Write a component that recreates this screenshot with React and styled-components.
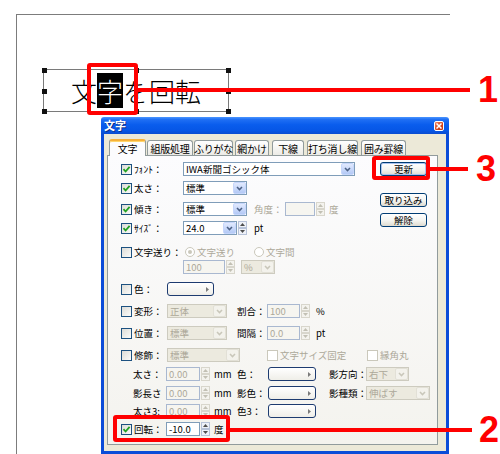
import React from "react";
import styled, { createGlobalStyle, css } from "styled-components";

const UI_FONT = `"Noto Sans CJK JP", "Noto Sans", sans-serif`;

const GlobalStyle = createGlobalStyle`
  html, body { margin: 0; padding: 0; background: #fff; }
  body { font-family: ${UI_FONT}; }
  * { box-sizing: border-box; }
`;

/* ---------- canvas ---------- */

const Stage = styled.div`
  position: relative;
  width: 500px;
  height: 454px;
  overflow: hidden;
  background: #fff;
`;

const PageSheet = styled.div`
  position: absolute;
  left: 16px;
  top: 14px;
  width: 434px;
  height: 460px;
  border-top: 1px solid #7c7c7c;
  border-left: 1px solid #7c7c7c;
`;

const TextFrame = styled.div`
  position: absolute;
  left: 26px;
  top: 54px;
  width: 186px;
  height: 43px;
  border: 1px solid #7a7a7a;
  display: flex;
  align-items: center;
  justify-content: center;
  font-size: 26px;
  font-weight: 300;
  line-height: 35px;
  color: #000;
`;

const Selected = styled.span`
  display: inline-block;
  background: #000;
  color: #fff;
  line-height: 35px;
`;

const Handle = styled.i`
  position: absolute;
  left: calc(${(p) => p.$x}% - 2px);
  top: calc(${(p) => p.$y}% - 2px);
  width: 5px;
  height: 5px;
  background: #111;
`;

/* ---------- dialog window ---------- */

const Dialog = styled.div`
  position: absolute;
  left: 101px;
  top: 117px;
  width: 348px;
  height: 337px;
  display: flex;
  flex-direction: column;
  font-size: 9.5px;
  color: #000;
`;

const TitleBar = styled.div`
  flex: none;
  height: 17px;
  display: flex;
  align-items: center;
  justify-content: space-between;
  padding: 0 5px 0 3px;
  border-radius: 3px 3px 0 0;
  background: linear-gradient(
    to bottom,
    #4a95ff 0%,
    #1f6ff4 15%,
    #0a5ded 45%,
    #0656e6 80%,
    #0a4cd0 100%
  );
`;

const TitleText = styled.span`
  color: #fff;
  font-weight: 700;
  font-size: 11px;
  line-height: 17px;
  text-shadow: 1px 1px 0 #0a2f8a;
`;

const CloseButton = styled.span`
  width: 10px;
  height: 10px;
  border: 1px solid #fff;
  border-radius: 2px;
  background: linear-gradient(135deg, #f08a6a, #d8461e 55%, #c03410);
  display: flex;
  align-items: center;
  justify-content: center;
`;

const Body = styled.div`
  flex: 1;
  display: flex;
  flex-direction: column;
  background: #ece9d8;
  border: 3px solid #0b4cd8;
  border-top: none;
  padding: 5px 8px 6px 3px;
`;

const TabRow = styled.div`
  display: flex;
  align-items: flex-end;
  height: 16px;
  padding-left: 2px;
  position: relative;
  z-index: 1;
`;

const Tab = styled.div`
  flex: none;
  width: ${(p) => p.$w}px;
  margin-left: ${(p) => p.$gap}px;
  height: 15px;
  border: 1px solid #919b9c;
  border-bottom: none;
  border-radius: 3px 3px 0 0;
  background: linear-gradient(to bottom, #fff, #ecebe6);
  display: flex;
  align-items: center;
  justify-content: center;
  font-size: 10px;
  letter-spacing: -0.2px;
  white-space: nowrap;
  line-height: 13px;
  ${(p) =>
    p.$active &&
    css`
      height: 17px;
      margin-bottom: -1px;
      border-top: 2px solid #f6b13a;
      background: #fcfcfe;
      box-shadow: inset 0 1px 0 #ffd66b;
    `}
`;

const Panel = styled.div`
  flex: 1;
  border: 1px solid #919b9c;
  background: linear-gradient(to bottom, #fcfcfe, #f4f3ee);
  padding: 0 10px 0 13px;
  display: flex;
  flex-direction: column;
`;

const Upper = styled.div`
  display: flex;
  align-items: flex-start;
  padding-top: 6px;
`;

const Rows = styled.div`
  flex: 1;
  display: flex;
  flex-direction: column;
`;

const ButtonStack = styled.div`
  flex: none;
  width: 47px;
  display: flex;
  flex-direction: column;
`;

const PushButton = styled.div`
  height: 14px;
  margin-bottom: ${(p) => p.$mb || 0}px;
  border: 1px solid #003c74;
  border-radius: 3px;
  background: linear-gradient(to bottom, #fff 0%, #f4f4f0 55%, #dedbd0 100%);
  display: flex;
  align-items: center;
  justify-content: center;
  font-size: 9.5px;
  line-height: 12px;
  ${(p) =>
    p.$default &&
    css`
      box-shadow: inset 0 0 0 1px #a9c3f0;
    `}
`;

const Row = styled.div`
  display: flex;
  align-items: center;
  height: 14px;
  margin-top: ${(p) => p.$mt || 0}px;
  white-space: nowrap;
`;

const Text = styled.span`
  flex: none;
  display: inline-block;
  width: ${(p) => (p.$w ? `${p.$w}px` : "auto")};
  margin-left: ${(p) => p.$ml || 0}px;
  padding-left: ${(p) => p.$pl || 0}px;
  color: ${(p) => (p.$dim ? "#aca899" : "#000")};
  line-height: 14px;
  overflow: visible;
`;

const CheckWrap = styled.span`
  flex: none;
  display: inline-flex;
  align-items: center;
  width: ${(p) => (p.$w ? `${p.$w}px` : "auto")};
  margin-left: ${(p) => p.$ml || 0}px;
`;

const Box = styled.span`
  flex: none;
  width: 11px;
  height: 11px;
  margin-right: 2px;
  border: 1px solid ${(p) => (p.$off ? "#cac8bb" : "#1c5180")};
  background: ${(p) =>
    p.$off ? "#fff" : "linear-gradient(135deg, #dcdcd7, #fbfbf9)"};
  display: flex;
  align-items: center;
  justify-content: center;
`;

const Label = styled.span`
  color: ${(p) => (p.$off ? "#aca899" : "#000")};
  line-height: 14px;
`;

const Field = styled.div`
  flex: none;
  width: ${(p) => p.$w}px;
  height: 14px;
  margin-left: ${(p) => p.$ml || 0}px;
  border: 1px solid ${(p) => (p.$off ? "#a9b8d0" : "#7f9db9")};
  background: ${(p) => (p.$off ? "#f6f5f0" : "#fff")};
  color: ${(p) => (p.$off ? "#aca899" : "#000")};
  padding-left: 2px;
  line-height: 12px;
  overflow: hidden;
`;

const ComboBox = styled.div`
  flex: none;
  display: flex;
  width: ${(p) => p.$w}px;
  height: 14px;
  margin-left: ${(p) => p.$ml || 0}px;
  border: 1px solid ${(p) => (p.$off ? "#cdcbbf" : "#7f9db9")};
  background: ${(p) => (p.$off ? "#eceadf" : "#fff")};
  color: ${(p) => (p.$off ? "#aca899" : "#000")};
`;

const ComboText = styled.span`
  flex: 1;
  padding-left: 2px;
  line-height: 12px;
  overflow: hidden;
`;

const DropButton = styled.span`
  flex: none;
  width: 13px;
  height: 12px;
  display: flex;
  align-items: center;
  justify-content: center;
  border: 1px solid ${(p) => (p.$off ? "#e2e0d6" : "#c6d6fb")};
  border-radius: 2px;
  background: ${(p) =>
    p.$off ? "#f3f2ec" : "linear-gradient(to bottom, #e2eafe, #b3c9f6)"};
`;

const Spinner = styled.div`
  flex: none;
  width: 9px;
  height: 14px;
  margin-left: 1px;
  display: flex;
  flex-direction: column;
`;

const SpinButton = styled.span`
  flex: 1;
  display: flex;
  align-items: center;
  justify-content: center;
  border: 1px solid ${(p) => (p.$off ? "#d8d6cc" : "#b7c2d8")};
  background: ${(p) => (p.$off ? "#f4f3ee" : "#eef1f8")};
`;

const Swatch = styled.div`
  flex: none;
  width: ${(p) => p.$w}px;
  height: 14px;
  margin-left: ${(p) => p.$ml || 0}px;
  border: 1px solid #1d3b70;
  border-radius: 3px;
  background: linear-gradient(to bottom, #fff, #efeee8);
  display: flex;
  align-items: center;
  justify-content: flex-end;
  padding-right: 4px;
`;

const RadioWrap = styled.span`
  flex: none;
  display: inline-flex;
  align-items: center;
  margin-left: ${(p) => p.$ml || 0}px;
  color: #aca899;
`;

const RadioRing = styled.span`
  width: 10px;
  height: 10px;
  margin-right: 2px;
  border-radius: 50%;
  border: 1px solid #cac8bb;
  background: #fff;
  display: flex;
  align-items: center;
  justify-content: center;
`;

const RadioDot = styled.span`
  width: 4px;
  height: 4px;
  border-radius: 50%;
  background: #cac8bb;
`;

/* ---------- callouts ---------- */

const CalloutBox = styled.div`
  position: absolute;
  left: ${(p) => p.$x}px;
  top: ${(p) => p.$y}px;
  width: ${(p) => p.$w}px;
  height: ${(p) => p.$h}px;
  border: 4px solid #ff0000;
  border-radius: 3px;
  z-index: 5;
`;

const CalloutLine = styled.div`
  position: absolute;
  left: ${(p) => p.$x}px;
  top: ${(p) => p.$y}px;
  width: ${(p) => p.$w}px;
  height: 4px;
  background: #ff0000;
  z-index: 5;
`;

const CalloutNumber = styled.div`
  position: absolute;
  left: ${(p) => p.$x}px;
  top: ${(p) => p.$y}px;
  font-family: "Liberation Sans", Arial, sans-serif;
  font-weight: 700;
  font-size: 36px;
  line-height: 36px;
  color: #ff0000;
  z-index: 5;
`;

/* ---------- small drawings ---------- */

const Tick = () => (
  <svg width="9" height="9" viewBox="0 0 9 9">
    <path d="M1.5 4.2 L3.6 6.5 L7.6 1.8" fill="none" stroke="#21a121" strokeWidth="1.8" />
  </svg>
);

const Chevron = ({ off }) => (
  <svg width="7" height="5" viewBox="0 0 7 5">
    <path
      d="M1 1 L3.5 3.6 L6 1"
      fill="none"
      stroke={off ? "#c9c7ba" : "#4d6185"}
      strokeWidth="1.5"
    />
  </svg>
);

const Arrow = ({ up, off }) => (
  <svg width="5" height="3" viewBox="0 0 5 3">
    <path d={up ? "M0 3 L2.5 0 L5 3Z" : "M0 0 L2.5 3 L5 0Z"} fill={off ? "#c2c0b4" : "#4d4d4d"} />
  </svg>
);

const RightTri = () => (
  <svg width="3" height="5" viewBox="0 0 3 5">
    <path d="M0 0 L3 2.5 L0 5Z" fill="#7a7a7a" />
  </svg>
);

/* ---------- controls ---------- */

function Check({ checked, off, w, ml, children }) {
  return (
    <CheckWrap $w={w} $ml={ml}>
      <Box $off={off}>{checked && <Tick />}</Box>
      <Label $off={off}>{children}</Label>
    </CheckWrap>
  );
}

function Combo({ w, ml, off, children }) {
  return (
    <ComboBox $w={w} $ml={ml} $off={off}>
      <ComboText>{children}</ComboText>
      <DropButton $off={off}>
        <Chevron off={off} />
      </DropButton>
    </ComboBox>
  );
}

function Spin({ off }) {
  return (
    <Spinner>
      <SpinButton $off={off}>
        <Arrow up off={off} />
      </SpinButton>
      <SpinButton $off={off}>
        <Arrow off={off} />
      </SpinButton>
    </Spinner>
  );
}

function Radio({ on, ml, children }) {
  return (
    <RadioWrap $ml={ml}>
      <RadioRing>{on && <RadioDot />}</RadioRing>
      {children}
    </RadioWrap>
  );
}

function ColorPick({ w, ml }) {
  return (
    <Swatch $w={w} $ml={ml}>
      <RightTri />
    </Swatch>
  );
}

const TABS = [
  { label: "文字", w: 37, gap: 0, active: true },
  { label: "組版処理", w: 46, gap: 1 },
  { label: "ふりがな", w: 39, gap: 1 },
  { label: "網かけ", w: 34, gap: 2 },
  { label: "下線", w: 32, gap: 3 },
  { label: "打ち消し線", w: 51, gap: 3 },
  { label: "囲み罫線", w: 45, gap: 3 },
];

const HANDLES = [
  [0, 0], [50, 0], [100, 0],
  [0, 50], [100, 50],
  [0, 100], [50, 100], [100, 100],
];

export default function App() {
  return (
    <>
      <GlobalStyle />
      <Stage>
        <PageSheet>
          <TextFrame>
            文<Selected>字</Selected>を回転
            {HANDLES.map(([x, y]) => (
              <Handle key={`${x}-${y}`} $x={x} $y={y} />
            ))}
          </TextFrame>
        </PageSheet>

        <Dialog>
          <TitleBar>
            <TitleText>文字</TitleText>
            <CloseButton>
              <svg width="6" height="6" viewBox="0 0 6 6">
                <path d="M0.5 0.5 L5.5 5.5 M5.5 0.5 L0.5 5.5" stroke="#fff" strokeWidth="1.5" />
              </svg>
            </CloseButton>
          </TitleBar>

          <Body>
            <TabRow>
              {TABS.map((t) => (
                <Tab key={t.label} $w={t.w} $gap={t.gap} $active={t.active}>
                  {t.label}
                </Tab>
              ))}
            </TabRow>

            <Panel>
              <Upper>
                <Rows>
                  <Row>
                    <Check checked w={62}>ﾌｫﾝﾄ：</Check>
                    <Combo w={172}>IWA新聞ゴシック体</Combo>
                  </Row>
                  <Row $mt={5}>
                    <Check checked w={62}>太さ：</Check>
                    <Combo w={64}>標準</Combo>
                  </Row>
                  <Row $mt={7}>
                    <Check checked w={62}>傾き：</Check>
                    <Combo w={64}>標準</Combo>
                    <Text $dim $ml={7} $w={31}>角度：</Text>
                    <Field $off $w={30} />
                    <Spin off />
                    <Text $dim $ml={4}>度</Text>
                  </Row>
                  <Row $mt={5}>
                    <Check checked w={62}>ｻｲｽﾞ：</Check>
                    <Combo w={54}>24.0</Combo>
                    <Spin />
                    <Text $ml={7}>pt</Text>
                  </Row>
                </Rows>
                <ButtonStack>
                  <PushButton $default $mb={17}>更新</PushButton>
                  <PushButton $mb={6}>取り込み</PushButton>
                  <PushButton>解除</PushButton>
                </ButtonStack>
              </Upper>

              <Row $mt={10}>
                <Check w={62}>文字送り：</Check>
                <Radio on ml={2}>文字送り</Radio>
                <Radio ml={19}>文字間</Radio>
              </Row>
              <Row $mt={1}>
                <Text $w={62} />
                <Field $off $w={42}>100</Field>
                <Spin off />
                <Combo off w={34} ml={6}>%</Combo>
              </Row>
              <Row $mt={8}>
                <Check w={46}>色：</Check>
                <ColorPick w={47} />
              </Row>
              <Row $mt={8}>
                <Check w={46}>変形：</Check>
                <Combo off w={60}>正体</Combo>
                <Text $ml={10} $w={30}>割合：</Text>
                <Field $off $w={33}>100</Field>
                <Spin off />
                <Text $ml={6}>%</Text>
              </Row>
              <Row $mt={8}>
                <Check w={46}>位置：</Check>
                <Combo off w={60}>標準</Combo>
                <Text $ml={10} $w={30}>間隔：</Text>
                <Field $off $w={33}>0.0</Field>
                <Spin off />
                <Text $ml={6}>pt</Text>
              </Row>
              <Row $mt={8}>
                <Check w={46}>修飾：</Check>
                <Combo off w={73}>標準</Combo>
                <Check off w={100} ml={27}>文字サイズ固定</Check>
                <Check off>縁角丸</Check>
              </Row>
              <Row $mt={5}>
                <Text $w={45} $pl={12}>太さ：</Text>
                <Field $off $w={34}>0.00</Field>
                <Spin off />
                <Text $w={27} $pl={4}>mm</Text>
                <Text $w={31}>色：</Text>
                <ColorPick w={48} />
                <Text $ml={13} $w={37}>影方向：</Text>
                <Combo off w={43}>右下</Combo>
              </Row>
              <Row $mt={5}>
                <Text $w={45} $pl={12}>影長さ</Text>
                <Field $off $w={34}>0.00</Field>
                <Spin off />
                <Text $w={27} $pl={4}>mm</Text>
                <Text $w={31}>影色：</Text>
                <ColorPick w={48} />
                <Text $ml={13} $w={37}>影種類：</Text>
                <Combo off w={64}>伸ばす</Combo>
              </Row>
              <Row $mt={4}>
                <Text $w={45} $pl={12}>太さ3:</Text>
                <Field $off $w={34}>0.00</Field>
                <Spin off />
                <Text $w={27} $pl={4}>mm</Text>
                <Text $w={31}>色3：</Text>
                <ColorPick w={48} />
              </Row>
              <Row $mt={4}>
                <Check checked w={45}>回転：</Check>
                <Field $w={34}>-10.0</Field>
                <Spin />
                <Text $ml={4}>度</Text>
              </Row>
            </Panel>
          </Body>
        </Dialog>

        <CalloutBox $x={87} $y={63} $w={51} $h={52} />
        <CalloutLine $x={138} $y={88} $w={332} />
        <CalloutNumber $x={478} $y={72}>1</CalloutNumber>

        <CalloutBox $x={372} $y={156} $w={58} $h={24} />
        <CalloutLine $x={430} $y={167} $w={38} />
        <CalloutNumber $x={476} $y={151}>3</CalloutNumber>

        <CalloutBox $x={113} $y={415} $w={117} $h={27} />
        <CalloutLine $x={230} $y={428} $w={242} />
        <CalloutNumber $x={479} $y={412}>2</CalloutNumber>
      </Stage>
    </>
  );
}
